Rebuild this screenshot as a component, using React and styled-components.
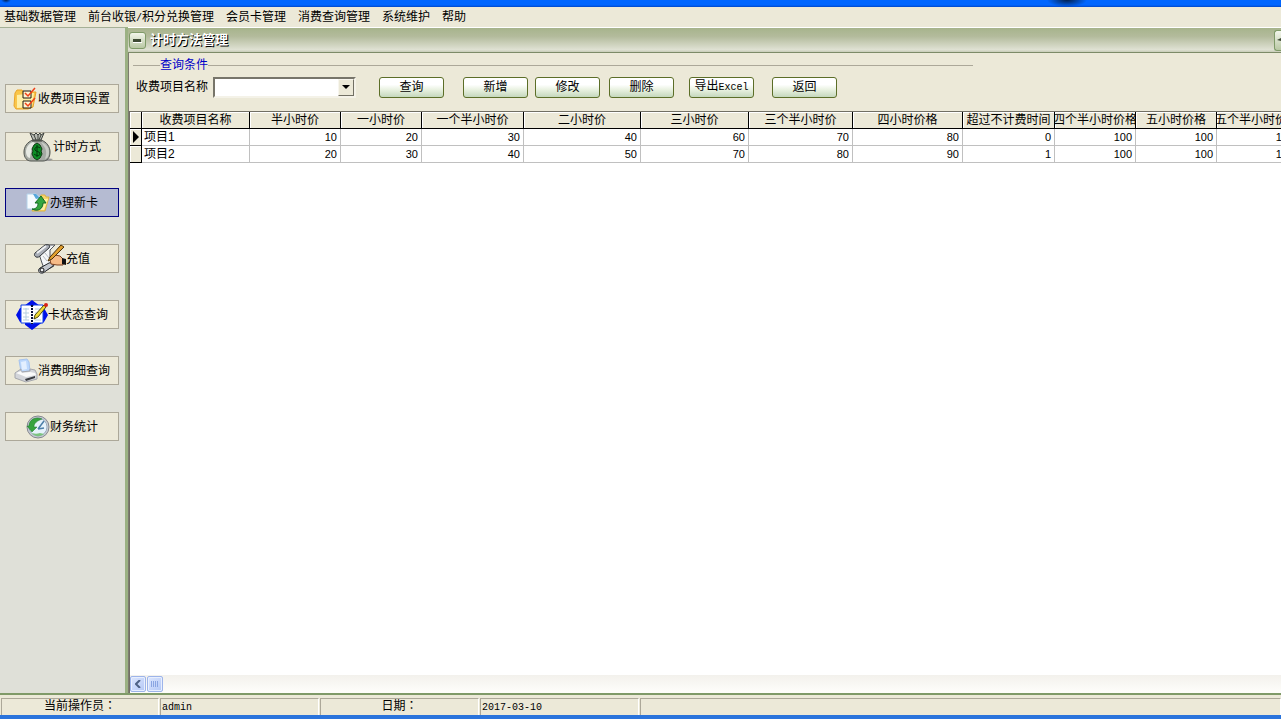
import React from 'react';
import styled, { createGlobalStyle, css } from 'styled-components';

const GlobalStyle = createGlobalStyle`
  * {
    box-sizing: border-box;
  }

  body {
    margin: 0;
    overflow: hidden;
    background: #ece9d8;
  }

  body, button, select {
    font-family: 'Liberation Sans', 'Noto Sans CJK SC', sans-serif;
    font-size: 12px;
    line-height: 16px;
    color: #000;
  }
`;

const Window = styled.div`
  display: flex;
  flex-direction: column;
  height: 100vh;
`;

const TopEdge = styled.div`
  flex: none;
  height: 7px;
  background:
    radial-gradient(ellipse 20px 7px at 1067px 0, #002050, transparent),
    radial-gradient(ellipse 5px 3px at 6px 0, #002050, transparent),
    linear-gradient(#0066ff 5px, #0046c8);
`;

const BottomEdge = styled.div`
  flex: none;
  height: 4px;
  background: #2a74dc;
`;

const MenuBar = styled.nav`
  display: flex;
  flex: none;
  gap: 12px;
  height: 20px;
  padding: 0 4px;
  background: #ece9d8;
`;

const MenuItem = styled.button`
  padding: 0;
  border: 0;
  background: none;
  line-height: 20px;
  white-space: nowrap;
`;

const Body = styled.div`
  display: flex;
  flex: 1;
  min-height: 0;
`;

const Sidebar = styled.aside`
  display: flex;
  flex: none;
  flex-direction: column;
  gap: 27px;
  width: 125px;
  padding: 56px 6px 0 5px;
  border-top: 1px solid #a5b096;
  background: #dfe0d8;
`;

const SideGroup = styled.div`
  display: flex;
  flex-direction: column;
  gap: 19px;
`;

const SideButton = styled.button`
  display: flex;
  align-items: center;
  justify-content: center;
  height: 29px;
  padding: 0;
  border: 1px solid ${({ $active }) => ($active ? '#000080' : '#aca899')};
  background: ${({ $active }) => ($active ? '#b5bbd2' : '#ece9d8')};
  white-space: nowrap;

  svg {
    flex: none;
    overflow: visible;
  }
`;

const Panel = styled.main`
  display: flex;
  flex: 1;
  flex-direction: column;
  min-width: 0;
  border-left: 3px solid #9bb183;
  background: #ece9d8;
`;

const TitleBar = styled.header`
  display: flex;
  flex: none;
  align-items: center;
  justify-content: space-between;
  height: 26px;
  padding-left: 1px;
  border-top: 1px solid #fff;
  border-bottom: 1px solid #7d8b68;
  background: linear-gradient(#a7b48c, #b3bb9c 35%, #dfe1d3 90%, #c8cdb8);
`;

const TitleGroup = styled.div`
  display: flex;
  align-items: center;
  gap: 4px;
`;

const Title = styled.h1`
  margin: 0;
  color: #fff;
  font-size: 13px;
  font-weight: 700;
  line-height: 20px;
  text-shadow: 1px 1px 0 #000;
`;

const CaptionButton = styled.button`
  display: flex;
  align-items: center;
  justify-content: center;
  width: 17px;
  height: 17px;
  padding: 0;
  border: 1px solid #7f9a68;
  border-radius: 3px;
  background: linear-gradient(#f2f5ea, #b9c8a4);
`;

const EdgeButton = styled(CaptionButton)`
  width: 7px;
  height: 21px;
  border-right: 0;
  border-radius: 3px 0 0 3px;
`;

const Content = styled.div`
  display: flex;
  flex: 1;
  flex-direction: column;
  min-height: 0;
  border-left: 1px solid #7d7c70;
`;

const Query = styled.form`
  flex: none;
  height: 58px;
  padding: 3px 4px 0;
`;

const QueryGroup = styled.fieldset`
  max-width: 840px;
  margin: 0;
  padding: 2px 0 0 3px;
  border: 0;
  border-top: 1px solid #aca899;
`;

const Legend = styled.legend`
  margin-left: 24px;
  padding: 0;
  color: #0000c8;
  line-height: 18px;
`;

const QueryRow = styled.div`
  display: flex;
  align-items: center;
  height: 22px;
  white-space: nowrap;
`;

const SelectBox = styled.div`
  position: relative;
  width: 143px;
  margin: 0 23px 0 5px;
`;

const Select = styled.select`
  display: block;
  width: 100%;
  height: 21px;
  padding: 0 20px 0 4px;
  border: 2px solid;
  border-color: #77756a #f4f2e8 #f4f2e8 #77756a;
  border-radius: 0;
  appearance: none;
  background: #fff;
`;

const SelectArrow = styled.span`
  position: absolute;
  top: 2px;
  right: 2px;
  display: flex;
  align-items: center;
  justify-content: center;
  width: 16px;
  height: 17px;
  border: 1px solid;
  border-color: #f8f6ee #716f64 #716f64 #f8f6ee;
  background: #ece9d8;
  pointer-events: none;
`;

const ActionButton = styled.button`
  flex: none;
  width: 65px;
  height: 21px;
  margin-right: ${({ $gap }) => $gap}px;
  padding: 0;
  border: 1px solid #5c6e28;
  border-radius: 3px;
  background: linear-gradient(#fff 35%, #eaf2e2 60%, #c5d8bd);
`;

const Latin = styled.span`
  font-family: 'Liberation Mono', monospace;
  font-size: 10px;
`;

const GridArea = styled.div`
  flex: 1;
  min-height: 0;
  overflow: hidden;
  border-top: 1px solid #716f64;
  border-left: 1px solid #716f64;
  background: #fff;
`;

const Grid = styled.table`
  width: 1168px;
  border-spacing: 0;
  table-layout: fixed;
`;

const raised = css`
  border-right: 1px solid #000;
  border-bottom: 1px solid #000;
  background: #ece9d8;
  box-shadow: inset 1px 1px 0 #fff;
`;

const HeaderCell = styled.th`
  height: 17px;
  padding: 0;
  overflow: hidden;
  font-weight: 400;
  line-height: 16px;
  white-space: nowrap;
  ${raised}

  span {
    display: flex;
    justify-content: center;
  }
`;

const MarkerCell = styled.td`
  height: 17px;
  padding: 0 0 0 3px;
  ${raised}

  svg {
    display: block;
  }
`;

const Cell = styled.td`
  height: 17px;
  padding: 0 3px 0 2px;
  border-right: 1px solid #c0c0c0;
  border-bottom: 1px solid #c0c0c0;
  font-size: ${({ $number }) => ($number ? 11 : 12)}px;
  line-height: 16px;
  text-align: ${({ $number }) => ($number ? 'right' : 'left')};
`;

const ScrollBar = styled.div`
  display: flex;
  flex: none;
  align-items: center;
  gap: 1px;
  height: 18px;
  border-left: 1px solid #716f64;
  background: linear-gradient(#f3f1ec, #fefefb);
`;

const ScrollButton = styled.button`
  display: flex;
  align-items: center;
  justify-content: center;
  width: 16px;
  height: 16px;
  padding: 0;
  border: 1px solid #9db4ea;
  border-radius: 2px;
  background: linear-gradient(135deg, #dce6fe, #b4c8f6);
  box-shadow: inset 0 0 0 1px #e8effe;
`;

const StatusBar = styled.footer`
  display: grid;
  flex: none;
  grid-template-columns: 158px 159px 159px 159px 1fr;
  column-gap: 1px;
  height: 22px;
  padding: 3px 0 1px 1px;
  border-top: 2px solid #7f9a68;
  background: #ece9d8;
`;

/* the TC face sets the full-width colon in the middle of its box */
const StatusCell = styled.div`
  padding: 0 1px;
  border: 1px solid;
  border-color: #aca899 #fff #fff #aca899;
  font-family: 'Liberation Sans', 'Noto Sans CJK TC', sans-serif;
  line-height: 15px;
  text-align: ${({ $center }) => ($center ? 'center' : 'left')};
`;

const ChecklistIcon = () => (
  <svg width="24" height="24" viewBox="0 0 24 24" aria-hidden="true">
    <path d="M1 6l2-3h5l2 2h12l-3 15-5 2H2L0 19z" fill="#f9c64a" stroke="#eaa52a" />
    <path d="M3 8l17-2-2 14-15 1z" fill="#ffefa6" />
    <path d="M9 4h8v7H9zM9 14h8v7H9z" fill="#fff3cf" stroke="#201810" />
    <path d="M11 6l3 3 7-8M11 16l3 3 7-8" fill="none" stroke="#f04018" strokeWidth="1.5" />
  </svg>
);

const MoneyBagIcon = () => (
  <svg width="30" height="30" viewBox="0 0 30 30" aria-hidden="true">
    <path d="M16 25l14 2-3 2H10z" fill="#999" />
    <path d="M10 8c-6 2-9 7-9 12 0 6 3 9 7 9h12c4 0 7-3 7-9 0-5-3-10-9-12z" fill="#a6aaa4" stroke="#50544f" />
    <path d="M10 10c-5 2-7 6-7 10 0 3 2 6 4 6 1-5 1-10 5-15z" fill="#e6e9e3" />
    <path d="M18 10l4 6c2 4 1 8 0 11 3-1 4-4 4-7 0-5-3-8-8-10z" fill="#c9ccc5" />
    <path d="M7 1l4 2 2-2 2 2 2-2 1 2 3-2-3 7h-8z" fill="#b9bcb5" stroke="#3c403c" />
    <path d="M11 3l2 5M15 3v5M18 3l-2 5M9 9h10" stroke="#40443c" fill="none" />
    <path d="M14 11l3 2 2 4-1 2 1 3-2 4-3 2-3-2-2-4 1-3-1-2 2-4z" fill="#0d8f26" stroke="#123c14" />
    <path d="M17 16c-2-2-6-1-5 2 1 2 5 1 5 4 0 2-4 2-6 0M14 13v12" fill="none" stroke="#04340b" />
  </svg>
);

const NewCardIcon = () => (
  <svg width="24" height="24" viewBox="0 0 24 24" aria-hidden="true">
    <path d="M11 6h3l1-2h4l1 2h3l-4 14H6z" fill="#f7d66b" stroke="#dcb33f" />
    <path d="M12 8h10l-4 11H8z" fill="#fff0a0" />
    <path d="M1 3h9l5 4v11H1z" fill="#f6fbff" stroke="#b3d2ea" />
    <path d="M7 3h3l4 4-4 1z" fill="#58a6dc" />
    <path d="M6 18c4 0 6-2 6-6H9l6-7 5 7h-3c0 6-5 9-11 6z" fill="#33a63f" stroke="#126a25" />
  </svg>
);

const ScrollPenIcon = () => (
  <svg width="32" height="30" viewBox="0 0 32 30" aria-hidden="true">
    <path d="M5 10L15 1h6l-5 5v9l4 7-9 5-3-8z" fill="#f4f6f8" stroke="#50555c" />
    <path d="M1 9L11 1c3-1 6 0 4 3L6 12c-3 3-7 0-5-3z" fill="#a9aeb7" stroke="#30343a" />
    <path d="M3 9l9-7" stroke="#eef0f3" strokeWidth="2" />
    <path d="M6 24l9-5c3-1 5 1 4 3l-10 7c-4 1-6-3-3-5z" fill="#c3c7ce" stroke="#22262c" />
    <circle cx="8" cy="26" r="2" fill="#eef0f3" stroke="#111" />
    <path d="M9 12l4 5M11 9l4 5" stroke="#b4b9c2" />
    <path d="M16 16l5-5 5 1 4 4-1 5h-6l-6-1z" fill="#f6bb88" stroke="#7b4020" />
    <path d="M27 1l3 2-12 12-4 2 2-4z" fill="#e2a02e" stroke="#4a300a" />
    <path d="M28 14l4 1v6l-4-1z" fill="#111" />
  </svg>
);

const BookIcon = () => (
  <svg width="32" height="30" viewBox="0 0 32 30" aria-hidden="true">
    <path d="M16 0l8 6 4 2 4 7-4 7-4 2-8 6-8-6-4-2-4-7 4-7 4-2z" fill="#0010e8" />
    <path d="M2 8l4-3h3v3zM2 22l4 3h3v-3z" fill="#ece9d8" />
    <path d="M5 5h9l2 1 2-1h9v18h-9l-2 1-2-1H5z" fill="#fff" stroke="#1040e8" />
    <path d="M16 5v19" stroke="#081038" strokeWidth="2" strokeDasharray="2 1" />
    <path d="M7 9h6M7 13h6M7 17h6M7 20h6M10 8v12M19 9h5M19 13h3M19 20h6" stroke="#b5cfdf" />
    <path d="M28 5l2 2-8 10-4 2 1-4z" fill="#f2dc32" stroke="#4c4810" />
    <circle cx="30" cy="5" r="2" fill="#d82018" />
  </svg>
);

const PrinterIcon = () => (
  <svg width="24" height="24" viewBox="0 0 24 24" aria-hidden="true">
    <path d="M5 1l8-1 2 3 1 9-9 1z" fill="#bcd8fc" stroke="#a6c3ee" />
    <path d="M7 3l5-1 1 8-5 1z" fill="#e3efff" />
    <path d="M1 14l6-4v3l9-1v-2l5 1 2 4v5l-11 3-11-4z" fill="#d3d5da" stroke="#a5a7ad" />
    <path d="M2 14l5-2 1 2 8-1 5 1 1 2-10 2z" fill="#fafafa" />
    <path d="M11 20l10-3v2l-9 3z" fill="#383b40" />
  </svg>
);

const ClockIcon = () => (
  <svg width="24" height="24" viewBox="0 0 24 24" aria-hidden="true">
    <circle cx="12" cy="12" r="11" fill="#c9cdd4" stroke="#84878f" />
    <circle cx="12" cy="12" r="9" fill="#e6f2fb" stroke="#9badbf" />
    <path d="M12 14l6-8M12 14l6-1" stroke="#4c7ea8" strokeWidth="1.5" />
    <path d="M16 4C9 1 3 5 3 11H1l5 6 5-5H8c0-4 3-6 8-8z" fill="#37a33e" stroke="#1d7728" strokeWidth=".5" />
    <path d="M6 18c3 4 8 4 12 1l-4-1c-3 1-5 1-8 0z" fill="#7cc47f" />
  </svg>
);

const menus = [
  { id: 'base', label: '基础数据管理' },
  { id: 'desk', label: <>前台收银<Latin>/</Latin>积分兑换管理</> },
  { id: 'card', label: '会员卡管理' },
  { id: 'spend', label: '消费查询管理' },
  { id: 'system', label: '系统维护' },
  { id: 'help', label: '帮助' },
];

const topLinks = [
  { label: '收费项目设置', Icon: ChecklistIcon },
  { label: '计时方式', Icon: MoneyBagIcon },
];

const links = [
  { label: '办理新卡', Icon: NewCardIcon, active: true },
  { label: '充值', Icon: ScrollPenIcon },
  { label: '卡状态查询', Icon: BookIcon },
  { label: '消费明细查询', Icon: PrinterIcon },
  { label: '财务统计', Icon: ClockIcon },
];

const actions = [
  { id: 'search', label: '查询', gap: 19 },
  { id: 'add', label: '新增', gap: 7 },
  { id: 'edit', label: '修改', gap: 9 },
  { id: 'remove', label: '删除', gap: 15 },
  { id: 'export', label: <>导出<Latin>Excel</Latin></>, gap: 18 },
  { id: 'back', label: '返回', gap: 0 },
];

const columns = [
  { title: '收费项目名称', width: 108 },
  { title: '半小时价', width: 91 },
  { title: '一小时价', width: 81 },
  { title: '一个半小时价', width: 102 },
  { title: '二小时价', width: 117 },
  { title: '三小时价', width: 108 },
  { title: '三个半小时价', width: 104 },
  { title: '四小时价格', width: 110 },
  { title: '超过不计费时间', width: 92 },
  { title: '四个半小时价格', width: 81 },
  { title: '五小时价格', width: 81 },
  { title: '五个半小时价格', width: 81 },
];

const rows = [
  ['项目1', 10, 20, 30, 40, 60, 70, 80, 0, 100, 100, 100],
  ['项目2', 20, 30, 40, 50, 70, 80, 90, 1, 100, 100, 100],
];

const SideLink = ({ label, Icon, active }) => (
  <SideButton type="button" $active={active}>
    <Icon />
    {label}
  </SideButton>
);

const PriceGrid = () => (
  <Grid>
    <colgroup>
      <col style={{ width: 12 }} />
      {columns.map(({ title, width }) => (
        <col key={title} style={{ width }} />
      ))}
    </colgroup>
    <thead>
      <tr>
        <HeaderCell aria-label="当前行" />
        {columns.map(({ title }) => (
          <HeaderCell key={title} scope="col">
            <span>{title}</span>
          </HeaderCell>
        ))}
      </tr>
    </thead>
    <tbody>
      {rows.map((row, index) => (
        <tr key={row[0]}>
          <MarkerCell>
            {index === 0 && (
              <svg width="7" height="12" viewBox="0 0 7 12" aria-hidden="true">
                <path d="M0 0l6 6-6 6z" />
              </svg>
            )}
          </MarkerCell>
          {row.map((value, i) => (
            <Cell key={columns[i].title} $number={i > 0}>
              {value}
            </Cell>
          ))}
        </tr>
      ))}
    </tbody>
  </Grid>
);

const App = () => (
  <Window>
    <GlobalStyle />
    <TopEdge />
    <MenuBar>
      {menus.map(({ id, label }) => (
        <MenuItem key={id} type="button">{label}</MenuItem>
      ))}
    </MenuBar>
    <Body>
      <Sidebar>
        <SideGroup>
          {topLinks.map((link) => (
            <SideLink key={link.label} {...link} />
          ))}
        </SideGroup>
        {links.map((link) => (
          <SideLink key={link.label} {...link} />
        ))}
      </Sidebar>
      <Panel>
        <TitleBar>
          <TitleGroup>
            <CaptionButton type="button" aria-label="折叠">
              <svg width="9" height="5" viewBox="0 0 9 5" aria-hidden="true">
                <path d="M0 1h8v3H0z" fill="#3e4a34" />
                <path d="M0 4h9v1H0z" fill="#fff" />
              </svg>
            </CaptionButton>
            <Title>计时方法管理</Title>
          </TitleGroup>
          <EdgeButton type="button" aria-label="关闭">
            <svg width="5" height="6" viewBox="0 0 5 6" aria-hidden="true">
              <path d="M1 3l4-2v3z" fill="#3e4a34" />
            </svg>
          </EdgeButton>
        </TitleBar>
        <Content>
          <Query onSubmit={(event) => event.preventDefault()}>
            <QueryGroup>
              <Legend>查询条件</Legend>
              <QueryRow>
                <label htmlFor="project">收费项目名称</label>
                <SelectBox>
                  <Select id="project" defaultValue="">
                    <option value="" />
                    <option>项目1</option>
                    <option>项目2</option>
                  </Select>
                  <SelectArrow>
                    <svg width="8" height="4" viewBox="0 0 8 4" aria-hidden="true">
                      <path d="M0 0h8L4 4z" />
                    </svg>
                  </SelectArrow>
                </SelectBox>
                {actions.map(({ id, label, gap }) => (
                  <ActionButton key={id} type="button" $gap={gap}>
                    {label}
                  </ActionButton>
                ))}
              </QueryRow>
            </QueryGroup>
          </Query>
          <GridArea>
            <PriceGrid />
          </GridArea>
          <ScrollBar>
            <ScrollButton type="button" aria-label="向左滚动">
              <svg width="6" height="8" viewBox="0 0 6 8" aria-hidden="true">
                <path d="M5 0L1 4l4 4" fill="none" stroke="#4d6185" strokeWidth="2" />
              </svg>
            </ScrollButton>
            <ScrollButton type="button" aria-label="滚动滑块">
              <svg width="8" height="6" viewBox="0 0 8 6" aria-hidden="true">
                <path d="M0 0h1v6H0zM2 0h1v6H2zM4 0h1v6H4zM6 0h1v6H6z" fill="#8aa5e2" />
              </svg>
            </ScrollButton>
          </ScrollBar>
        </Content>
      </Panel>
    </Body>
    <StatusBar>
      <StatusCell $center>当前操作员：</StatusCell>
      <StatusCell><Latin>admin</Latin></StatusCell>
      <StatusCell $center>日期：</StatusCell>
      <StatusCell><Latin>2017-03-10</Latin></StatusCell>
      <StatusCell />
    </StatusBar>
    <BottomEdge />
  </Window>
);

export default App;
